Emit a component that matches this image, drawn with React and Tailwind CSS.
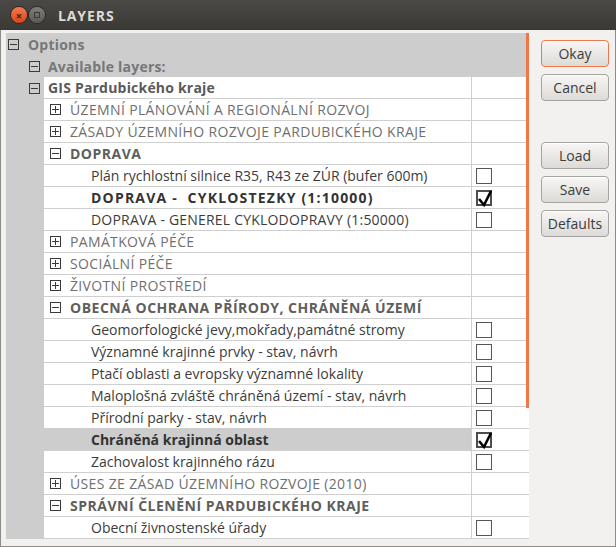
import React from "react";

const rows = [
  { t: "ÚZEMNÍ PLÁNOVÁNÍ A REGIONÁLNÍ ROZVOJ", kind: "cat" },
  { t: "ZÁSADY ÚZEMNÍHO ROZVOJE PARDUBICKÉHO KRAJE", kind: "cat" },
  { t: "DOPRAVA", kind: "cat", open: true },
  { t: "Plán rychlostní silnice R35, R43 ze ZÚR (bufer 600m)", kind: "leaf", check: false },
  { t: "DOPRAVA -  CYKLOSTEZKY (1:10000)", kind: "leaf", bold: true, caps: true, check: true },
  { t: "DOPRAVA - GENEREL CYKLODOPRAVY (1:50000)", kind: "leaf", caps: true, check: false },
  { t: "PAMÁTKOVÁ PÉČE", kind: "cat" },
  { t: "SOCIÁLNÍ PÉČE", kind: "cat" },
  { t: "ŽIVOTNÍ PROSTŘEDÍ", kind: "cat" },
  { t: "OBECNÁ OCHRANA PŘÍRODY, CHRÁNĚNÁ ÚZEMÍ", kind: "cat", open: true },
  { t: "Geomorfologické jevy,mokřady,památné stromy", kind: "leaf", check: false },
  { t: "Významné krajinné prvky - stav, návrh", kind: "leaf", check: false },
  { t: "Ptačí oblasti a evropsky významné lokality", kind: "leaf", check: false },
  { t: "Maloplošná zvláště chráněná území - stav, návrh", kind: "leaf", check: false },
  { t: "Přírodní parky - stav, návrh", kind: "leaf", check: false },
  { t: "Chráněná krajinná oblast", kind: "leaf", bold: true, check: true, selected: true },
  { t: "Zachovalost krajinného rázu", kind: "leaf", check: false },
  { t: "ÚSES ZE ZÁSAD ÚZEMNÍHO ROZVOJE (2010)", kind: "cat" },
  { t: "SPRÁVNÍ ČLENĚNÍ PARDUBICKÉHO KRAJE", kind: "cat", open: true },
  { t: "Obecní živnostenské úřady", kind: "leaf", check: false },
];

function Expander({ open }) {
  return (
    <svg width="11" height="11" viewBox="0 0 11 11" className="shrink-0">
      <rect x="0.5" y="0.5" width="10" height="10" fill="none" stroke="#3a3a3a" />
      <line x1="2" y1="5.5" x2="9" y2="5.5" stroke="#3a3a3a" />
      {!open && <line x1="5.5" y1="2" x2="5.5" y2="9" stroke="#3a3a3a" />}
    </svg>
  );
}

function CheckBox({ checked }) {
  if (!checked) {
    return <div className="h-[16px] w-[16px] border border-[#555]" />;
  }
  return (
    <div className="relative h-[16px] w-[16px] border-2 border-[#4d4d4d]">
      <svg width="20" height="20" viewBox="0 0 20 20" className="absolute -left-[2px] -top-[4px]">
        <path d="M3 11 L8 17 L15 3" fill="none" stroke="#000" strokeWidth="2.6" />
      </svg>
    </div>
  );
}

function Btn({ children, focus }) {
  return (
    <button
      type="button"
      className={`h-[27px] w-[68px] rounded-[4px] border bg-gradient-to-b from-[#f7f6f5] to-[#dddbd7] text-[14px] text-[#3c3c3c] shadow-[inset_0_1px_0_#fff] ${
        focus ? "border-[#f07746]" : "border-[#a6a4a0]"
      }`}
    >
      {children}
    </button>
  );
}

function textClass(r) {
  if (r.kind === "cat") {
    return r.open
      ? "ml-[9px] font-bold tracking-[0.5px] text-[#5e5e5e]"
      : "ml-[9px] tracking-[0.35px] text-[#6f6f6f]";
  }
  if (r.bold) return r.caps ? "font-bold tracking-[1.2px] text-[#333]" : "font-bold text-[#333]";
  return r.caps ? "tracking-[0.2px] text-[#3c3c3c]" : "text-[#3c3c3c]";
}

export default function App() {
  return (
    <div
      className="flex h-[547px] w-[616px] flex-col overflow-hidden"
      style={{ fontFamily: '"Open Sans", "Noto Sans", sans-serif' }}
    >
      {/* Title bar */}
      <div className="flex h-[30px] items-center bg-gradient-to-b from-[#4a4945] to-[#3a3935] pl-[11px]">
        <div className="flex h-[16px] w-[16px] items-center justify-center rounded-full bg-gradient-to-b from-[#f6794a] to-[#d6441b] shadow-[0_0_0_1px_#2a2926]">
          <span className="text-[11px] font-bold leading-none text-[#3a2015]">×</span>
        </div>
        <div className="ml-[2px] flex h-[16px] w-[16px] items-center justify-center rounded-full bg-gradient-to-b from-[#807e79] to-[#5c5a56] shadow-[0_0_0_1px_#2a2926]">
          <div className="h-[6px] w-[6px] border border-[#3a3935]" />
        </div>
        <span className="ml-[13px] text-[14px] font-bold tracking-[0.9px] text-[#dfdbd2]">LAYERS</span>
      </div>

      {/* Body */}
      <div className="flex flex-1 border-x border-b border-[#8e8c88] bg-[#f2f1f0] pl-[5px] pt-[3px]">
        <div className="relative h-[506px] w-[523px] bg-[#cdcdcd] text-[14px]">
          <div className="flex h-[22px] items-center pl-[2px]">
            <Expander open />
            <span className="ml-[9px] font-bold tracking-[0.2px] text-[#777]">Options</span>
          </div>
          <div className="flex h-[22px] items-center pl-[23px]">
            <Expander open />
            <span className="ml-[8px] font-bold tracking-[0.2px] text-[#777]">Available layers:</span>
          </div>
          <div className="flex">
            <div className="w-[38px]">
              <div className="flex h-[22px] items-center pl-[23px]">
                <Expander open />
              </div>
            </div>
            <div className="w-[485px] bg-white">
              <div className="flex h-[22px] border-b border-[#cfcfcf]">
                <div className="flex w-[428px] items-center border-r border-[#cfcfcf] pl-[4px]">
                  <span className="font-bold tracking-[0.2px] text-[#5a5a5a]">GIS Pardubického kraje</span>
                </div>
                <div className="flex-1" />
              </div>
              {rows.map((r, i) => (
                <div key={i} className="flex h-[22px] border-b border-[#cfcfcf]">
                  <div
                    className={`flex w-[428px] items-center overflow-hidden border-r border-[#cfcfcf] ${
                      r.selected ? "bg-[#cdcdcd]" : ""
                    } ${r.kind === "cat" ? "pl-[6px]" : "pl-[47px]"}`}
                  >
                    {r.kind === "cat" && <Expander open={r.open} />}
                    <span className={`whitespace-pre ${textClass(r)}`}>{r.t}</span>
                  </div>
                  <div className="flex flex-1 items-start pl-[4px] pt-[3px]">
                    {r.kind === "leaf" && <CheckBox checked={r.check} />}
                  </div>
                </div>
              ))}
            </div>
          </div>
          {/* overlay scrollbar */}
          <div className="absolute right-0 top-0 h-[375px] w-[3px] bg-[#f07746]" />
        </div>

        <div className="ml-[12px] flex flex-col pt-[7px]">
          <Btn focus>Okay</Btn>
          <div className="mt-[7px]">
            <Btn>Cancel</Btn>
          </div>
          <div className="mt-[41px]">
            <Btn>Load</Btn>
          </div>
          <div className="mt-[7px]">
            <Btn>Save</Btn>
          </div>
          <div className="mt-[7px]">
            <Btn>Defaults</Btn>
          </div>
        </div>
      </div>
    </div>
  );
}
